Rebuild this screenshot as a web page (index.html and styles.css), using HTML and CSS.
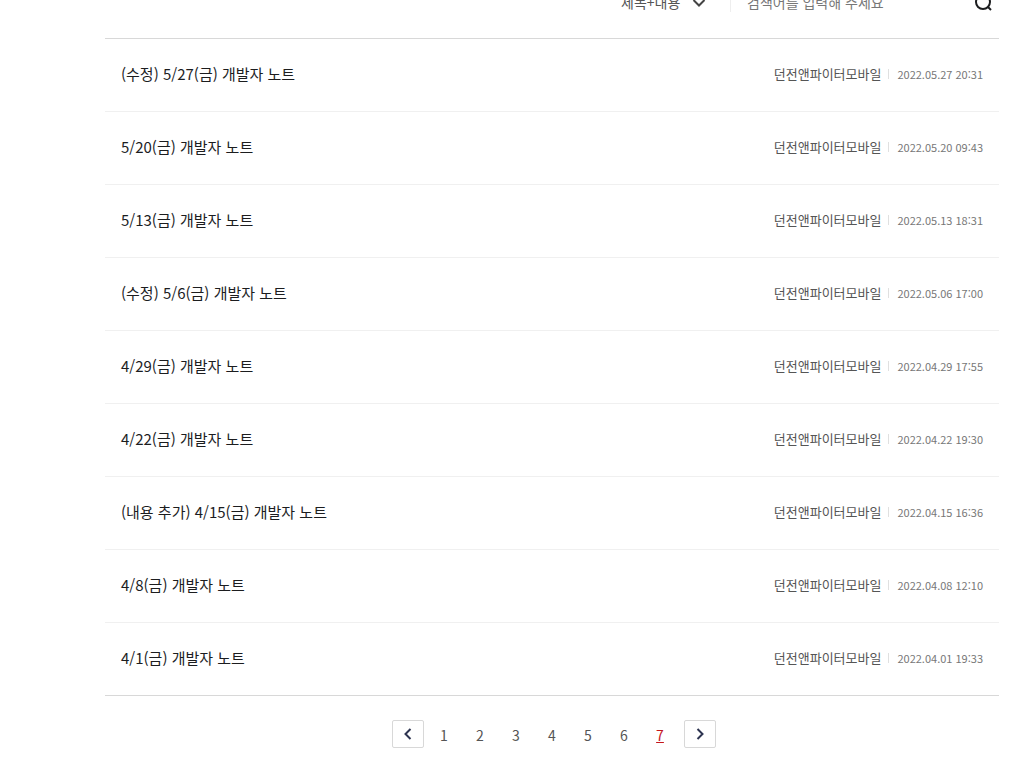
FILE: index.html
```html
<!DOCTYPE html>
<html lang="ko">
<head>
<meta charset="utf-8">
<meta name="viewport" content="width=device-width, initial-scale=1">
<title>개발자 노트</title>
<link rel="stylesheet" href="styles.css">
</head>
<body>
<main class="board">
  <form class="search">
    <div class="search-type">
      <select class="search-select" aria-label="검색 조건"><option>제목+내용</option></select>
      <svg class="search-arrow" viewBox="0 0 14 14" aria-hidden="true"><path d="M1.5 4 7 9.500 12.500 4"/></svg>
    </div>
    <input class="search-input" type="text" placeholder="검색어를 입력해 주세요" aria-label="검색어">
    <button class="search-button" type="submit" aria-label="검색">
      <svg class="search-icon" viewBox="0 0 20 20" aria-hidden="true"><circle cx="10" cy="9" r="7"/><path d="m14.500 13.500 3.500 3.500"/></svg>
    </button>
  </form>
  <ul class="posts">
    <li class="post"><a class="post-title" href="#">(수정) 5/27(금) 개발자 노트</a><span class="post-author">던전앤파이터모바일</span><time class="post-date">2022.05.27 20:31</time></li>
    <li class="post"><a class="post-title" href="#">5/20(금) 개발자 노트</a><span class="post-author">던전앤파이터모바일</span><time class="post-date">2022.05.20 09:43</time></li>
    <li class="post"><a class="post-title" href="#">5/13(금) 개발자 노트</a><span class="post-author">던전앤파이터모바일</span><time class="post-date">2022.05.13 18:31</time></li>
    <li class="post"><a class="post-title" href="#">(수정) 5/6(금) 개발자 노트</a><span class="post-author">던전앤파이터모바일</span><time class="post-date">2022.05.06 17:00</time></li>
    <li class="post"><a class="post-title" href="#">4/29(금) 개발자 노트</a><span class="post-author">던전앤파이터모바일</span><time class="post-date">2022.04.29 17:55</time></li>
    <li class="post"><a class="post-title" href="#">4/22(금) 개발자 노트</a><span class="post-author">던전앤파이터모바일</span><time class="post-date">2022.04.22 19:30</time></li>
    <li class="post"><a class="post-title" href="#">(내용 추가) 4/15(금) 개발자 노트</a><span class="post-author">던전앤파이터모바일</span><time class="post-date">2022.04.15 16:36</time></li>
    <li class="post"><a class="post-title" href="#">4/8(금) 개발자 노트</a><span class="post-author">던전앤파이터모바일</span><time class="post-date">2022.04.08 12:10</time></li>
    <li class="post"><a class="post-title" href="#">4/1(금) 개발자 노트</a><span class="post-author">던전앤파이터모바일</span><time class="post-date">2022.04.01 19:33</time></li>
  </ul>
  <nav class="pager" aria-label="페이지">
    <button class="pager-button" type="button" aria-label="이전"><svg class="pager-icon" viewBox="0 0 14 14" aria-hidden="true"><path d="M9.5 2 4.500 7l5 5"/></svg></button>
    <div class="pager-pages">
      <a class="page" href="#">1</a>
      <a class="page" href="#">2</a>
      <a class="page" href="#">3</a>
      <a class="page" href="#">4</a>
      <a class="page" href="#">5</a>
      <a class="page" href="#">6</a>
      <a class="page page-current" href="#" aria-current="page">7</a>
    </div>
    <button class="pager-button" type="button" aria-label="다음"><svg class="pager-icon" viewBox="0 0 14 14" aria-hidden="true"><path d="m4.500 2 5 5-5 5"/></svg></button>
  </nav>
</main>
</body>
</html>
```

FILE: styles.css
```css
* {
  box-sizing: border-box;
}

body {
  margin: 0;
  background: #fff;
  color: #1c1d1f;
  font-family: "Noto Sans CJK KR", sans-serif;
  font-size: 15px;
  overflow: hidden;
}

.board {
  margin: -16px 23px 0 105px;
}

/* Search bar, partly scrolled past the top edge */
.search {
  display: flex;
  justify-content: flex-end;
  align-items: center;
  height: 38px;
  margin-bottom: 16px;
}

.search-type {
  display: flex;
  align-items: center;
  position: relative;
  width: 110px;
  height: 18px;
  border-right: 1px solid #eee;
}

.search-select {
  width: 100%;
  padding: 0 0 2px;
  border: 0;
  background: none;
  appearance: none;
  color: #555;
  font: 14px/20px "Noto Sans CJK KR", sans-serif;
}

.search-arrow {
  position: absolute;
  right: 24px;
  width: 14px;
  height: 14px;
  pointer-events: none;
  fill: none;
  stroke: #444;
  stroke-width: 2;
}

.search-input {
  width: 228px;
  padding: 0 0 2px 16px;
  border: 0;
  outline: 0;
  background: none;
  font: 14px/20px "Noto Sans CJK KR", sans-serif;
}

.search-input::placeholder {
  color: #777;
}

.search-button {
  display: flex;
  justify-content: center;
  width: 40px;
  padding: 0 0 0 8px;
  border: 0;
  background: none;
}

.search-icon {
  width: 20px;
  height: 20px;
  fill: none;
  stroke: #1c1d1f;
  stroke-width: 2;
}

.posts {
  margin: 0;
  padding: 0;
  list-style: none;
  border-top: 1px solid #d8d8d8;
  border-bottom: 1px solid #d8d8d8;
}

.post {
  display: flex;
  align-items: center;
  padding: 23px 16px 25px;
  line-height: 24px;
}

.post + .post {
  border-top: 1px solid #f0f0f0;
}

.post-title {
  flex: 1;
  color: #1c1d1f;
  text-decoration: none;
}

.post-author {
  color: #555;
  font-size: 13px;
}

.post-date {
  display: flex;
  align-items: center;
  color: #777;
  font-size: 11px;
}

.post-date::before {
  content: "";
  width: 1px;
  height: 10px;
  margin: 0 8px 0 7px;
  background: #e0e0e0;
}

.pager {
  display: flex;
  justify-content: center;
  gap: 4px;
  margin-top: 24px;
  padding-left: 4px;
}

.pager-button {
  display: flex;
  justify-content: center;
  align-items: center;
  width: 32px;
  height: 28px;
  padding: 0;
  border: 1px solid #d8d8d8;
  border-radius: 2px;
  background: #fff;
}

.pager-icon {
  width: 14px;
  height: 14px;
  fill: none;
  stroke: #2d3450;
  stroke-width: 2;
}

.pager-pages {
  display: flex;
  gap: 4px;
  padding-right: 4px;
}

.page {
  width: 32px;
  color: #555;
  font-size: 14px;
  line-height: 30px;
  text-align: center;
  text-decoration: none;
}

.page-current {
  color: #c5161d;
  text-decoration: underline;
}
```
